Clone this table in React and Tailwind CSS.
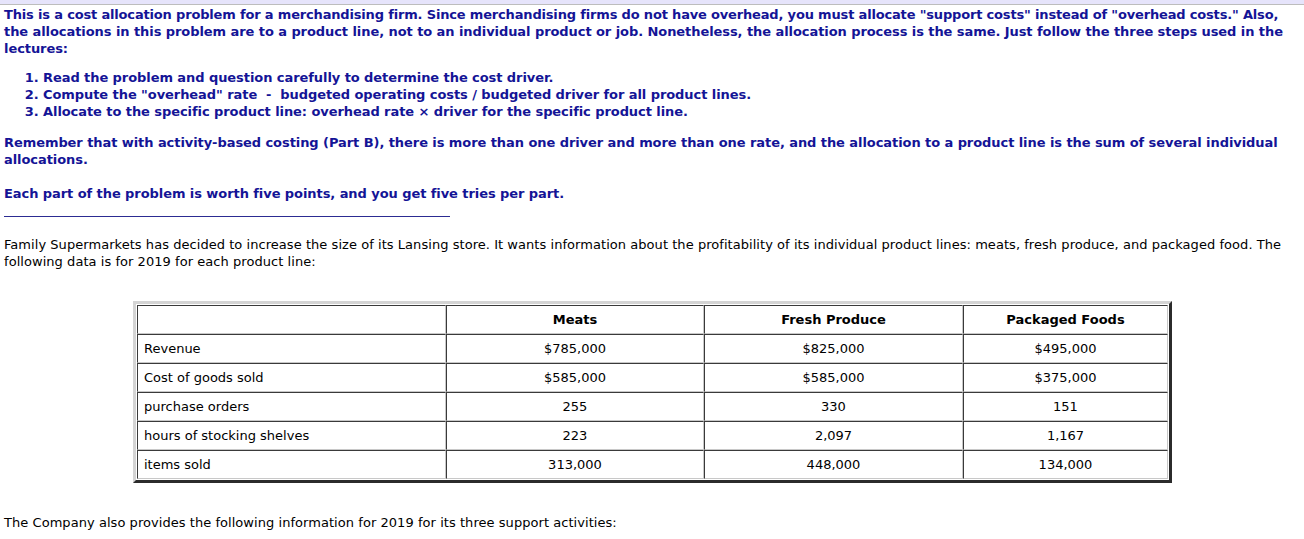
import React from 'react';

const ROWS = [
  { label: 'Revenue', values: ['$785,000', '$825,000', '$495,000'] },
  { label: 'Cost of goods sold', values: ['$585,000', '$585,000', '$375,000'] },
  { label: 'purchase orders', values: ['255', '330', '151'] },
  { label: 'hours of stocking shelves', values: ['223', '2,097', '1,167'] },
  { label: 'items sold', values: ['313,000', '448,000', '134,000'] },
];

const HEADERS = ['Meats', 'Fresh Produce', 'Packaged Foods'];
const COL_WIDTHS = ['w-[258px]', 'w-[259px]', 'w-[205px]'];

const cell = 'h-[29px] border-t border-l border-b border-r border-t-[#3a3a3a] border-l-[#3a3a3a] border-b-[#c8c8c8] border-r-[#c8c8c8] px-[6px] p-0';

const App = () => {
  return (
    <div className="w-[1304px] h-[539px] overflow-hidden bg-white text-[13px] leading-[17px]" style={{ fontFamily: '"DejaVu Sans", Verdana, sans-serif' }}>
      {/* top strip */}
      <div className="h-[5px] bg-[#e6e4fb] border-b border-[#bdbdbd]" />

      {/* instructions */}
      <div className="px-[4px] pt-[1px] font-bold text-[#141496] tracking-[-0.07px] whitespace-nowrap">
        <p>
          <span className="tracking-[-0.17px]">This is a cost allocation problem for a merchandising firm. Since merchandising firms do not have overhead, you must allocate "support costs" instead of "overhead costs." Also,</span>
          <br />
          the allocations in this problem are to a product line, not to an individual product or job. Nonetheless, the allocation process is the same. Just follow the three steps used in the
          <br />
          lectures:
        </p>

        <ol className="mt-[12px] pl-[39px] list-decimal">
          <li>Read the problem and question carefully to determine the cost driver.</li>
          <li>Compute the "overhead" rate &nbsp;-&nbsp; budgeted operating costs / budgeted driver for all product lines.</li>
          <li>Allocate to the specific product line: overhead rate × driver for the specific product line.</li>
        </ol>

        <p className="mt-[14px]">
          Remember that with activity-based costing (Part B), there is more than one driver and more than one rate, and the allocation to a product line is the sum of several individual
          <br />
          allocations.
        </p>

        <p className="mt-[17px]">Each part of the problem is worth five points, and you get five tries per part.</p>
        <div className="mt-[14px] w-[446px] border-b border-[#2c2c92]" />
      </div>

      {/* problem text */}
      <p className="px-[4px] mt-[19px] text-black tracking-[0.05px] whitespace-nowrap">
        Family Supermarkets has decided to increase the size of its Lansing store. It wants information about the profitability of its individual product lines: meats, fresh produce, and packaged food. The
        <br />
        following data is for 2019 for each product line:
      </p>

      <div className="mt-[31px] pl-[133px]">
        <table className="table-fixed border-separate border-spacing-0 w-[1039px] p-[1px] border-[3px] border-t-[#d4d4d4] border-l-[#d4d4d4] border-b-[#2b2b2b] border-r-[#2b2b2b] text-black">
          <thead>
            <tr>
              <th className={`${cell} w-[309px]`} />
              {HEADERS.map((h, i) => (
                <th key={h} className={`${cell} ${COL_WIDTHS[i]} text-center font-bold`}>{h}</th>
              ))}
            </tr>
          </thead>
          <tbody>
            {ROWS.map((row) => (
              <tr key={row.label}>
                <td className={`${cell} text-left`}>{row.label}</td>
                {row.values.map((v, i) => (
                  <td key={i} className={`${cell} text-center`}>{v}</td>
                ))}
              </tr>
            ))}
          </tbody>
        </table>
      </div>

      <p className="px-[4px] mt-[31px] text-black tracking-[0.05px]">The Company also provides the following information for 2019 for its three support activities:</p>
    </div>
  );
};

export default App;
